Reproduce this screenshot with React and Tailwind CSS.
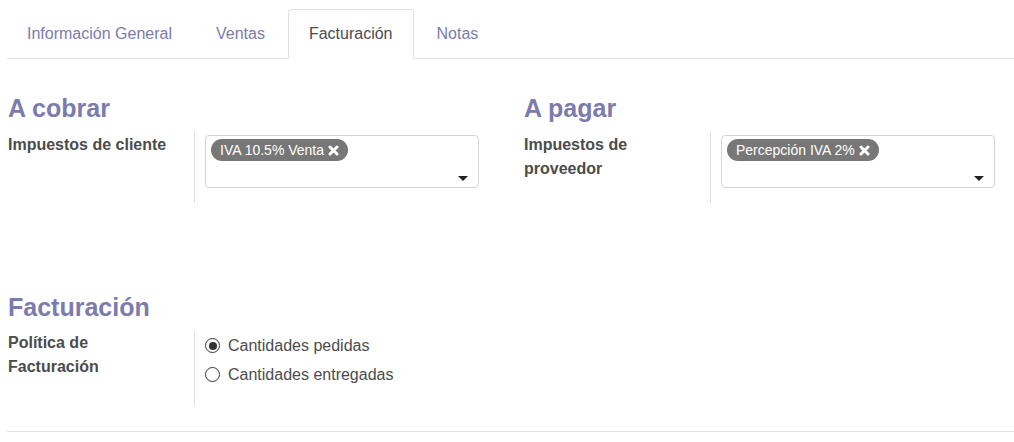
import React from "react";

const tabs = ["Información General", "Ventas", "Facturación", "Notas"];

function Tag({ label }) {
    return (
        <span className="inline-flex items-center h-[22px] pl-[9px] pr-[9px] rounded-full bg-[#777777] text-white text-[14px] leading-[22px]">
            {label}
            <svg className="ml-[4px]" width="11" height="11" viewBox="0 0 11 11">
                <path d="M2 2 L9 9 M9 2 L2 9" stroke="#ffffff" strokeWidth="3" strokeLinecap="round" />
            </svg>
        </span>
    );
}

function TagInput({ tag }) {
    return (
        <div className="ml-[10px] mt-[3px] w-[274px] h-[53px] border border-[#d4d4d4] rounded-[4px] flex flex-col pl-[5px] pt-[3px] pr-[10px] pb-[6px]">
            <div className="flex">
                <Tag label={tag} />
            </div>
            <div className="flex-1 flex items-end justify-end">
                <svg width="10" height="5" viewBox="0 0 10 5">
                    <path d="M0 0 L10 0 L5 5 Z" fill="#222222" />
                </svg>
            </div>
        </div>
    );
}

function FieldRow({ label, children, minH = "min-h-[71px]", pad = "pt-[1px]" }) {
    return (
        <div className="flex">
            <div className={`w-[187px] shrink-0 border-r border-[#dee2e6] ${minH} ${pad} pr-3 text-[16px] leading-6 font-bold text-[#4c4c4c]`}>
                {label}
            </div>
            {children}
        </div>
    );
}

function Radio({ checked, label }) {
    return (
        <label className="flex items-center gap-[8px] text-[16px] leading-[29px] text-[#4c4c4c]">
            <span className={`w-[15px] h-[15px] rounded-full flex items-center justify-center ${checked ? "border-[1.5px] border-[#333333]" : "border border-[#333333]"}`}>
                {checked && <span className="w-[8px] h-[8px] rounded-full bg-[#333333]" />}
            </span>
            {label}
        </label>
    );
}

export default function App() {
    return (
        <div className="bg-white w-[1014px] h-[442px] pl-[7px] pt-[9px] font-['Liberation_Sans',Arial,sans-serif]">
            {/* Tabs */}
            <div className="flex border-b border-[#dee2e6]">
                <div className="flex -ml-px">
                    {tabs.map((t) => {
                        const active = t === "Facturación";
                        return (
                            <div
                                key={t}
                                className={
                                    active
                                        ? "mr-[2px] -mb-px px-5 py-3 text-[16px] leading-6 text-[#4c4c4c] bg-white border border-[#dee2e6] border-b-white rounded-t-[4px]"
                                        : "mr-[2px] -mb-px px-5 py-3 text-[16px] leading-6 text-[#7c7bad] border border-transparent"
                                }
                            >
                                {t}
                            </div>
                        );
                    })}
                </div>
            </div>

            <div className="pl-[1px]">
                {/* A cobrar / A pagar */}
                <div className="flex mt-[34px]">
                    <div className="w-[471px]">
                        <h2 className="text-[25px] leading-[30px] font-bold text-[#7c7bad]">A cobrar</h2>
                        <div className="mt-[9px]">
                            <FieldRow label="Impuestos de cliente">
                                <TagInput tag="IVA 10.5% Venta" />
                            </FieldRow>
                        </div>
                    </div>
                    <div className="w-[471px] ml-[45px]">
                        <h2 className="text-[25px] leading-[30px] font-bold text-[#7c7bad]">A pagar</h2>
                        <div className="mt-[9px]">
                            <FieldRow label={<>Impuestos de<br />proveedor</>}>
                                <TagInput tag="Percepción IVA 2%" />
                            </FieldRow>
                        </div>
                    </div>
                </div>

                {/* Facturación */}
                <div className="mt-[89px] w-[471px]">
                    <h2 className="text-[25px] leading-[30px] font-bold text-[#7c7bad]">Facturación</h2>
                    <div className="mt-[9px]">
                        <FieldRow label={<>Política de<br />Facturación</>} minH="min-h-[75px]" pad="pt-0">
                            <div className="ml-[10px] flex flex-col">
                                <Radio checked label="Cantidades pedidas" />
                                <Radio label="Cantidades entregadas" />
                            </div>
                        </FieldRow>
                    </div>
                </div>
            </div>

            <div className="mt-[25px] border-t border-[#dee2e6]" />
        </div>
    );
}
